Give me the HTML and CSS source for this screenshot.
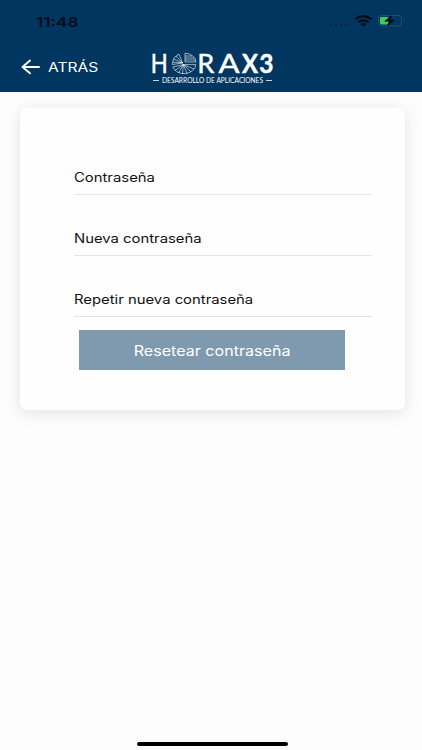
FILE: index.html
```html
<!DOCTYPE html>
<html lang="es">
  <head>
    <meta charset="UTF-8">
    <meta name="viewport" content="width=device-width, initial-scale=1">
    <title>Resetear contraseña</title>
    <link rel="stylesheet" href="styles.css">
  </head>
  <body>
    <header class="header">
      <div class="status-bar">
        <span class="time">11:48</span>
        <svg class="status-icons" width="76" height="14" viewBox="0 0 76 14">
          <g fill="#0a2442">
            <circle cx="2" cy="10.5" r="1.2"/>
            <circle cx="7.3" cy="10.5" r="1.2"/>
            <circle cx="12.6" cy="10.5" r="1.2"/>
            <circle cx="17.9" cy="10.5" r="1.2"/>
          </g>
          <g fill="none" stroke="#000c18" stroke-width="2.2">
            <path d="M26.5 5.2 Q34.5 -.8 42.5 5.2"/>
            <path d="M29.3 8.2 Q34.5 4.4 39.7 8.2"/>
          </g>
          <path d="M31.6 10 Q34.5 8 37.4 10 L34.5 12.4 Z" fill="#000c18"/>
          <rect x="49.5" y="1.5" width="23" height="10.5" rx="3" fill="none" stroke="#2b4a68" stroke-width="1"/>
          <path d="M74 5 q1.8 1.7 0 3.6z" fill="#2b4a68"/>
          <rect x="51" y="3" width="8.6" height="7.4" rx="1.4" fill="#3ccb63"/>
          <path d="M63 1 L55 7.4 H59.8 L58 12.4 L66 5.8 H61.4 Z" fill="#000c18"/>
        </svg>
      </div>
      <nav class="nav">
        <a class="back" href="#">
          <svg width="19" height="16" viewBox="0 0 19 16" fill="none" stroke="#fff" stroke-width="1.9" stroke-linecap="round" stroke-linejoin="round">
            <path d="M18 8 H1.5 M9 1.5 L1.5 8 L9 14.3"/>
          </svg>
          <span>ATRÁS</span>
        </a>
        <svg class="logo" width="130" height="50" viewBox="148 42 130 50">
          <g class="logo-name">
            <text x="150.8" y="73.2" textLength="17" lengthAdjust="spacingAndGlyphs">H</text>
            <text x="197.3" y="73.2" textLength="17" lengthAdjust="spacingAndGlyphs">R</text>
            <text x="218.5" y="73.2" textLength="21" lengthAdjust="spacingAndGlyphs">A</text>
            <text class="bold" x="242" y="73.2" textLength="16" lengthAdjust="spacingAndGlyphs">X</text>
            <text class="bold" x="259.2" y="73.2" textLength="14.2" lengthAdjust="spacingAndGlyphs">3</text>
          </g>
          <g fill="none" stroke="#fff" stroke-width=".6">
            <!-- upper left slice -->
            <path d="M182.6 63 L172.5 64.5 A11 11 0 0 1 179 54.2 Z"/>
            <path d="M182.6 63 L172.8 62 M182.6 63 L173.8 59 M182.6 63 L176 56"/>
            <!-- upper right slice -->
            <path d="M185 62 V53.2 A11.2 9.2 0 0 1 196 62 Z"/>
            <path d="M185 60 H195.4 M185 58 H194.2 M185 56 H192"/>
            <!-- lower half -->
            <path d="M183.3 64.6 L195.8 64.6 A11.8 9.6 0 0 1 172.8 67 Z"/>
            <path d="M183.3 64.6 L194 69 M183.3 64.6 L191 72 M183.3 64.6 L187 73.6 M183.3 64.6 L182.5 74 M183.3 64.6 L178.5 73 M183.3 64.6 L175 70.5"/>
          </g>
          <text class="logo-sub" x="162" y="82.8" textLength="101" lengthAdjust="spacingAndGlyphs">DESARROLLO DE APLICACIONES</text>
          <path d="M153 80.5 H159 M266 80.5 H272" stroke="#c9d7e2" stroke-width="1"/>
        </svg>
      </nav>
    </header>

    <main class="card">
      <form>
        <div class="field"><label>Contraseña</label></div>
        <div class="field"><label>Nueva contraseña</label></div>
        <div class="field"><label>Repetir nueva contraseña</label></div>
        <button type="button"><span>Resetear contraseña</span></button>
      </form>
    </main>

    <div class="home-indicator"></div>
  </body>
</html>
```
FILE: styles.css
```css
* {
  box-sizing: border-box;
}

body {
  display: flex;
  flex-direction: column;
  height: 750px;
  margin: 0;
  overflow: hidden;
  background-color: #fdfdfd;
  font-family: Inter, "Liberation Sans", sans-serif;
}

.header {
  height: 92px;
  background-color: #003660;
}

.status-bar {
  display: flex;
  justify-content: space-between;
  height: 42px;
  padding: 14px 17px 0 36px;
}

.time {
  height: 16px;
  color: #000c18;
  font-size: 13.5px;
  font-weight: 600;
  line-height: 16px;
  transform: scaleX(1.27);
  transform-origin: left;
}

.nav {
  display: flex;
  height: 50px;
}

.back {
  display: flex;
  align-items: center;
  gap: 8px;
  width: 148px;
  padding-left: 21px;
  color: #fff;
  font-size: 13px;
  text-decoration: none;
}

.back span {
  transform: scaleX(1.2);
  transform-origin: left;
}

.logo {
  fill: #fff;
}

.logo-name {
  font-family: Lato, sans-serif;
  font-size: 27.5px;
  stroke: #fff;
  stroke-width: 0.5;
}

.logo-name .bold {
  font-weight: bold;
}

.logo-sub {
  font-family: Lato, sans-serif;
  font-size: 6.8px;
}

.card {
  width: 385px;
  height: 302px;
  margin: 16px 0 0 20px;
  padding: 42px 33px 0 54px;
  border-radius: 7px;
  background-color: #fefefe;
  box-shadow: 0 3px 16px rgba(0, 0, 0, 0.11);
}

.field {
  display: flex;
  align-items: flex-end;
  height: 61px;
  padding-bottom: 8px;
  border-bottom: 1px solid #e4e5e7;
}

.field:first-child {
  height: 45px;
}

.field label {
  color: #111;
  font-size: 12.8px;
  line-height: 16px;
  transform: scaleX(1.16);
  transform-origin: left;
}

button {
  display: block;
  width: 266px;
  height: 40px;
  margin: 13px 0 0 5px;
  padding: 0;
  border: none;
  background-color: #7f99af;
  color: #fff;
  font-family: inherit;
  font-size: 14.2px;
}

button span {
  display: inline-block;
  transform: scaleX(1.135);
}

.home-indicator {
  width: 151px;
  height: 4px;
  margin: auto 0 4px 137px;
  border-radius: 2px;
  background-color: #000;
}
```
